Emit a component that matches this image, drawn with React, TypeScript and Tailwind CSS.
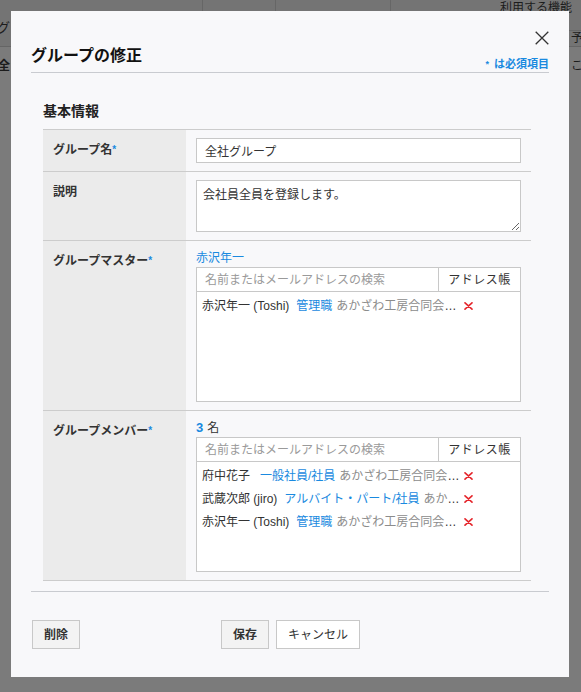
import React from "react";

type Member = {
  name: string;
  gap: string;
  role: string;
  org: string;
};

const master: Member[] = [
  { name: "赤沢年一 (Toshi)", gap: "ml-[7px]", role: "管理職", org: "あかざわ工房合同会社 本社" },
];

const members: Member[] = [
  { name: "府中花子", gap: "ml-[10px]", role: "一般社員/社員", org: "あかざわ工房合同会社 本社" },
  { name: "武蔵次郎 (jiro)", gap: "ml-[7px]", role: "アルバイト・パート/社員", org: "あかざわ工房合同会社 本社" },
  { name: "赤沢年一 (Toshi)", gap: "ml-[7px]", role: "管理職", org: "あかざわ工房合同会社 本社" },
];

function Backdrop() {
  // the page underneath the dialog, dimmed by the overlay
  return (
    <div className="absolute inset-0 whitespace-nowrap bg-[#7b7b7b] text-[#1c1c1c]">
      <div className="absolute left-0 right-0 top-0 h-[47px] border-b border-[#656565] bg-[#747474]" />
      <div className="absolute left-[202px] top-0 h-[11px] w-px bg-[#666]" />
      <div className="absolute left-[275px] top-0 h-[11px] w-px bg-[#666]" />
      <div className="absolute left-[390px] top-0 h-[11px] w-px bg-[#666]" />
      <div className="absolute right-0 top-[30px] h-px w-[20px] bg-[#666]" />
      <span className="absolute left-[500px] top-[1px] text-[12px] leading-[14px]">利用する機能</span>
      <span className="absolute left-[-3px] top-[20px] text-[13px] leading-[16px]">グ</span>
      <span className="absolute left-[-2px] top-[58px] text-[12px] font-bold leading-[16px]">全</span>
      <span className="absolute left-[571px] top-[30px] text-[12px] leading-[16px]">予定</span>
      <span className="absolute left-[571px] top-[58px] text-[12px] leading-[16px]">こて</span>
    </div>
  );
}

function Cross() {
  return (
    <svg width="9" height="8" viewBox="0 0 9 8" className="shrink-0">
      <path d="M1 0.8L8 7.2M8 0.8L1 7.2" stroke="#e5262c" strokeWidth="1.6" strokeLinecap="round" />
    </svg>
  );
}

function UserPicker({ items }: { items: Member[] }) {
  return (
    <div className="h-[135px] border border-[#c8c8c8] bg-white">
      <div className="flex h-[24px] border-b border-[#c8c8c8]">
        <input
          readOnly
          placeholder="名前またはメールアドレスの検索"
          className="min-w-0 flex-1 bg-white px-[8px] text-[12px] text-[#333] outline-none placeholder:text-[#9a9a9a]"
        />
        <button className="w-[82px] border-l border-[#c8c8c8] bg-white text-[12px] tracking-[0.5px] text-[#333]">
          アドレス帳
        </button>
      </div>
      <div className="pl-[5px] pt-[3px]">
        {items.map((m, i) => (
          <div key={i} className="flex h-[23px] items-center">
            <div className="w-[259px] overflow-hidden text-ellipsis whitespace-nowrap text-[12px] leading-[23px]">
              <span className="text-[#333]">{m.name}</span>
              <span className={`${m.gap} text-[#1a8ae0]`}>{m.role}</span>
              <span className="ml-[4px] text-[#8c8c8c]">{m.org}</span>
            </div>
            <span className="-mt-[2px] ml-[3px]">
              <Cross />
            </span>
          </div>
        ))}
      </div>
    </div>
  );
}

function Label({ text, required }: { text: string; required?: boolean }) {
  return (
    <div className="bg-[#ebebeb] px-[10px] pt-[11px] text-[12px] font-bold leading-[18px] text-[#333]">
      {text}
      {required && <span className="relative top-[-1px] text-[10px] text-[#1a8ae0]">*</span>}
    </div>
  );
}

export default function App() {
  return (
    <div className="relative h-[692px] w-[581px] overflow-hidden font-['Liberation_Sans','Noto_Sans_CJK_JP',sans-serif]">
      <Backdrop />

      <div className="absolute left-[11px] top-[11px] flex h-[666px] w-[558px] flex-col bg-[#f8f8fa] px-[20px] text-[#333]">
        <button className="absolute right-[20px] top-[20px]" aria-label="閉じる">
          <svg width="14" height="14" viewBox="0 0 14 14">
            <path d="M0.7 0.7L13.3 13.3M13.3 0.7L0.7 13.3" stroke="#333" strokeWidth="1.3" />
          </svg>
        </button>

        <div className="mt-[33px] flex items-end justify-between border-b border-[#c9cbd0]">
          <h2 className="mb-[4px] text-[16px] font-bold leading-[24px] text-[#111]">グループの修正</h2>
          <span className="text-[11px] font-bold leading-[13px] text-[#1a8ae0]">
            <span className="relative top-[-1px] mr-[5px] text-[9px]">*</span>は必須項目
          </span>
        </div>

        <div className="pl-[12px] pr-[18px]">
          <h3 className="mt-[28px] text-[14px] font-bold leading-[20px] text-[#222]">基本情報</h3>

          <div className="mt-[8px] border-t border-[#cccccc]">
            <div className="grid grid-cols-[143px_1fr] border-b border-[#cccccc]">
              <Label text="グループ名" required />
              <div className="px-[10px] pb-[8px] pt-[8px]">
                <input
                  readOnly
                  value="全社グループ"
                  className="block h-[25px] w-full border border-[#c8c8c8] bg-white px-[8px] text-[12px] text-[#333] outline-none"
                />
              </div>
            </div>

            <div className="grid grid-cols-[143px_1fr] border-b border-[#cccccc]">
              <Label text="説明" />
              <div className="px-[10px] pb-[8px] pt-[8px]">
                <textarea
                  readOnly
                  defaultValue="会社員全員を登録します。"
                  className="block h-[52px] w-full border border-[#c8c8c8] bg-white px-[6px] pt-[5px] text-[12px] leading-[18px] text-[#333] outline-none"
                />
              </div>
            </div>

            <div className="grid grid-cols-[143px_1fr] border-b border-[#cccccc]">
              <Label text="グループマスター" required />
              <div className="px-[10px] pb-[8px] pt-[9px]">
                <div className="mb-[1px] text-[12px] leading-[16px] text-[#1a8ae0]">赤沢年一</div>
                <UserPicker items={master} />
              </div>
            </div>

            <div className="grid grid-cols-[143px_1fr] border-b border-[#cccccc]">
              <Label text="グループメンバー" required />
              <div className="px-[10px] pb-[8px] pt-[9px]">
                <div className="mb-[1px] text-[12px] leading-[16px]">
                  <span className="text-[13px] font-bold text-[#1a8ae0]">3</span>
                  <span className="ml-[4px] text-[#333]">名</span>
                </div>
                <UserPicker items={members} />
              </div>
            </div>
          </div>
        </div>

        <div className="mt-[10px] border-t border-[#c9cbd0]" />

        <div className="mt-[28px] grid grid-cols-[1fr_auto_1fr] items-start pl-[1px]">
          <div>
            <button className="h-[29px] border border-[#c8c8c8] bg-[#f3f3f3] px-[11px] text-[12px] font-bold text-[#333]">
              削除
            </button>
          </div>
          <div className="flex gap-[7px]">
            <button className="h-[29px] border border-[#c8c8c8] bg-[#f3f3f3] px-[11px] text-[12px] font-bold text-[#333]">
              保存
            </button>
            <button className="h-[29px] border border-[#c8c8c8] bg-white px-[11px] text-[12px] text-[#333]">
              キャンセル
            </button>
          </div>
          <div />
        </div>
      </div>
    </div>
  );
}
